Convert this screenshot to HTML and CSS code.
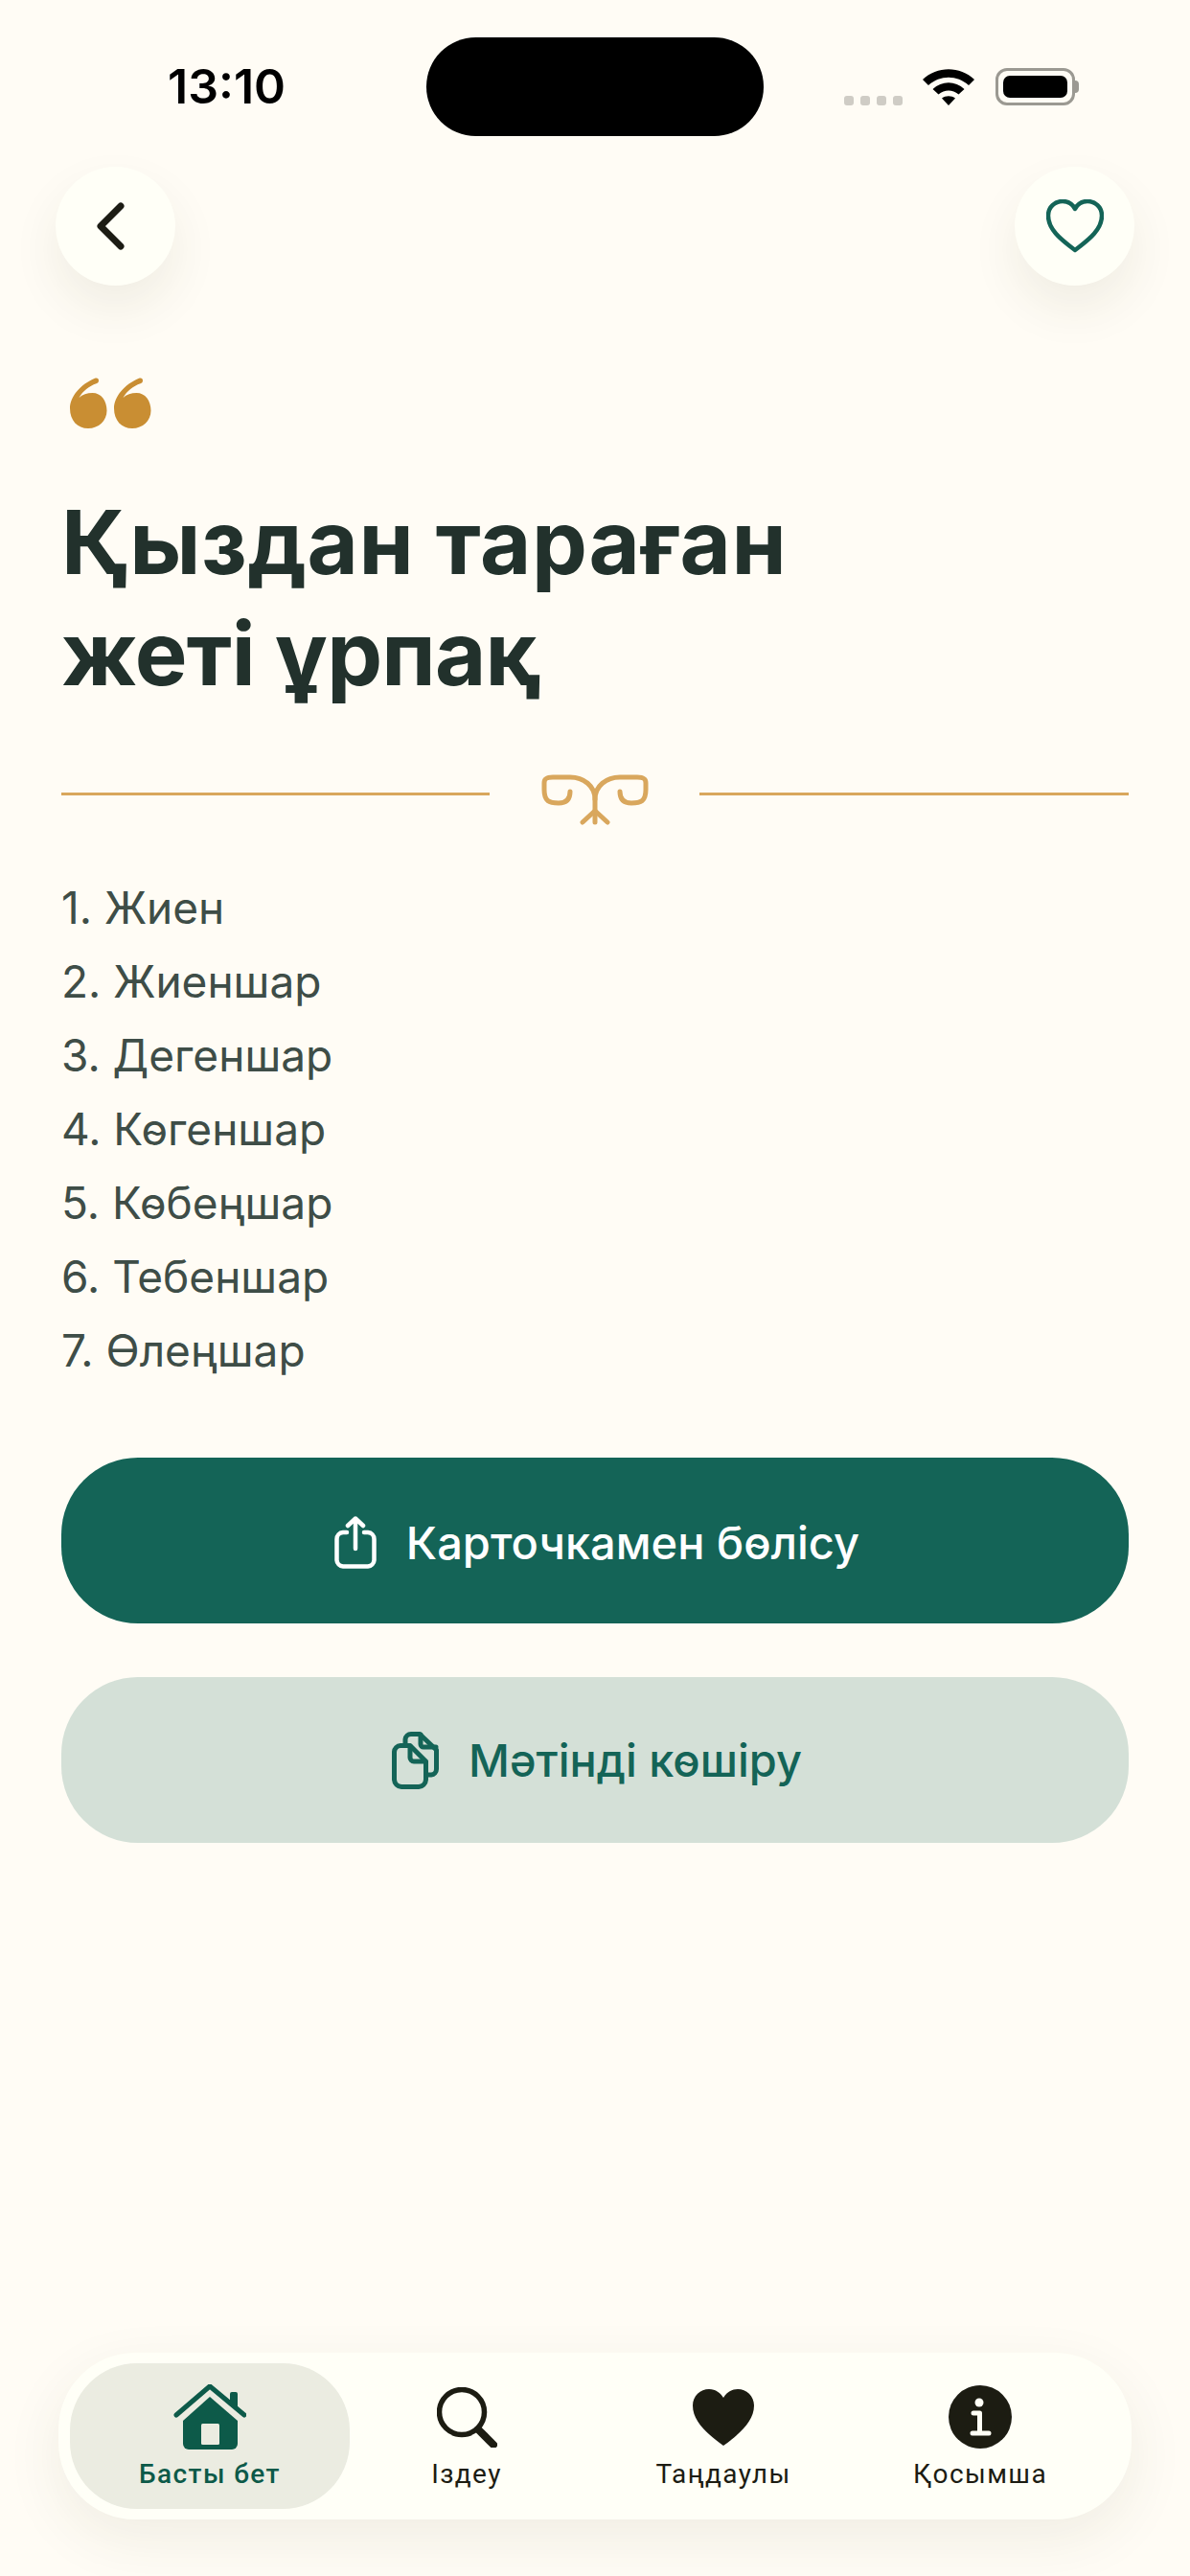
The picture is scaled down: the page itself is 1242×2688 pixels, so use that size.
FILE: index.html
```html
<!DOCTYPE html>
<html lang="kk">
<head>
    <meta charset="UTF-8">
    <meta name="viewport" content="width=device-width, initial-scale=1.0">
    <title>Қыздан тараған жеті ұрпақ</title>
    <link rel="stylesheet" href="styles.css">
</head>
<body>
    <!-- status bar -->
    <div class="status">
        <span class="time">13:10</span>
        <div class="island"></div>
        <div class="status-icons">
            <div class="dots"><i></i><i></i><i></i><i></i></div>
            <svg class="wifi" width="54" height="38" viewBox="0 0 54 38">
                <path d="M0 11C15 -3.500 39 -3.500 54 11L48 17C36 6 18 6 6 17Z"/>
                <path d="M10.500 21C20 12 34 12 43.500 21L37.500 26.500C31 21 23 21 16.500 26.500Z"/>
                <path d="M20 30.500C24 27.500 30 27.500 34 30.500L27 38Z"/>
            </svg>
            <div class="battery"><div class="battery-fill"></div></div>
            <div class="battery-cap"></div>
        </div>
    </div>

    <!-- top buttons -->
    <div class="top">
        <a class="round-btn" href="javascript:;">
            <svg class="back-icon" width="34" height="56" viewBox="0 0 34 56"><path d="M26 7L5 28L26 49" fill="none" stroke="#1c1c14" stroke-width="7" stroke-linecap="round" stroke-linejoin="round"/></svg>
        </a>
        <a class="round-btn" href="javascript:;">
            <svg width="60" height="56" viewBox="0 0 60 56"><path d="M30 53C14 41 2 31 2 17C2 8 9 2 17 2C23 2 27.500 5 30 10C32.500 5 37 2 43 2C51 2 58 8 58 17C58 31 46 41 30 53Z" fill="none" stroke="#146457" stroke-width="4.500" stroke-linejoin="round"/></svg>
        </a>
    </div>

    <div class="content">
        <svg class="quote" width="85" height="53" viewBox="0 0 85 53">
            <path id="quoteMark" d="M9.500 21C13 17.500 18 16 23.500 16C32.500 16 38.500 24 38.500 34.500C38.500 45 30 53 19 53C8 53 0 45 0 32C0 20 11 7 26 .800C28.500 0 30 1 30 3C30 5 29 5.800 27.500 6.300C20 9 13.500 14 9.500 21Z"/>
            <use href="#quoteMark" x="46"/>
        </svg>

        <h1 class="title"><span class="title-first">Қыздан тараған</span><span class="title-second">жеті ұрпақ</span></h1>

        <div class="divider">
            <div class="divider-line"></div>
            <svg class="ornament" width="112" height="53" viewBox="0 0 112 53" fill="none" stroke="#d9a75d" stroke-width="5" stroke-linecap="round" stroke-linejoin="round">
                <path d="M30 18C30 26 26 30 18 30C8 30 3 28 3 16L3 9C3 4 6 3 12 3L30 3C44 3 56 12 56 26L56 50"/>
                <path d="M82 18C82 26 86 30 94 30C104 30 109 28 109 16L109 9C109 4 106 3 100 3L82 3C68 3 56 12 56 26"/>
                <path d="M43 50L56 38L69 50"/>
            </svg>
            <div class="divider-line"></div>
        </div>

        <ol class="list">
            <li>1. Жиен</li>
            <li>2. Жиеншар</li>
            <li>3. Дегеншар</li>
            <li>4. Көгеншар</li>
            <li>5. Көбеңшар</li>
            <li>6. Тебеншар</li>
            <li>7. Өлеңшар</li>
        </ol>

        <a class="btn btn-main" href="javascript:;">
            <svg width="44" height="55" viewBox="0 0 44 55" fill="none" stroke="#fff" stroke-width="4.500" stroke-linecap="round" stroke-linejoin="round">
                <path d="M13 17H9A7 7 0 0 0 2.500 24V46A7 7 0 0 0 9 52.500H35A7 7 0 0 0 41.500 46V24A7 7 0 0 0 35 17H31"/>
                <path d="M22 34V2.500M14 10L22 2.500L30 10"/>
            </svg>
            <span>Карточкамен бөлісу</span>
        </a>
        <a class="btn btn-light" href="javascript:;">
            <svg width="49" height="60" viewBox="0 0 49 60" fill="none" stroke="#146457" stroke-width="5" stroke-linecap="round" stroke-linejoin="round">
                <path d="M14 13V8A6 6 0 0 1 20 2.500H29L46.500 19V39A6 6 0 0 1 41 45H37"/>
                <path d="M30 3V13A3 3 0 0 0 33 16H46"/>
                <path d="M9 14.500H19L35.500 31V50A8 8 0 0 1 28 57.500H10A8 8 0 0 1 2.500 50V21A7 7 0 0 1 9 14.500Z"/>
                <path d="M19 15V27A4 4 0 0 0 23 31H35"/>
            </svg>
            <span>Мәтінді көшіру</span>
        </a>
    </div>

    <!-- bottom tabs -->
    <nav class="tabbar">
        <a class="tab tab-active" href="javascript:;">
            <span class="tab-icon">
                <svg width="76" height="68" viewBox="0 0 76 68">
                    <path d="M59 22V10A2 2 0 0 1 61 8H65A2 2 0 0 1 67 10V26Z" fill="#0d5a49"/>
                    <path d="M3 32L38 2L74 32" fill="none" stroke="#0d5a49" stroke-width="5" stroke-linecap="round" stroke-linejoin="round"/>
                    <path d="M38 13L67 38V62A6 6 0 0 1 61 68H16A6 6 0 0 1 10 62V38Z" fill="#0d5a49"/>
                    <rect x="29" y="41" width="19" height="22" rx="1.500" fill="#ebece1"/>
                </svg>
            </span>
            <span class="tab-label">Басты бет</span>
        </a>
        <a class="tab" href="javascript:;">
            <span class="tab-icon">
                <svg width="63" height="63" viewBox="0 0 63 63" fill="none" stroke="#1c1c12">
                    <circle cx="26" cy="26" r="23.500" stroke-width="5.500"/>
                    <path d="M43 44L59 60" stroke-width="8" stroke-linecap="round"/>
                </svg>
            </span>
            <span class="tab-label">Іздеу</span>
        </a>
        <a class="tab" href="javascript:;">
            <span class="tab-icon">
                <svg width="64" height="59" viewBox="0 0 64 59"><path d="M32 59C14 46 0 33 0 17C0 7 8 0 17 0C24 0 29 4 32 9C35 4 40 0 47 0C56 0 64 7 64 17C64 33 50 46 32 59Z" fill="#1c1c12"/></svg>
            </span>
            <span class="tab-label">Таңдаулы</span>
        </a>
        <a class="tab" href="javascript:;">
            <span class="tab-icon">
                <svg width="66" height="66" viewBox="0 0 66 66">
                    <circle cx="33" cy="33" r="33" fill="#1c1c12"/>
                    <circle cx="32" cy="18" r="4.500" fill="#fffff6"/>
                    <path d="M26 29H32.500V49M25 50H42" fill="none" stroke="#fffff6" stroke-width="5" stroke-linecap="round" stroke-linejoin="round"/>
                </svg>
            </span>
            <span class="tab-label">Қосымша</span>
        </a>
    </nav>
</body>
</html>
```

FILE: styles.css
```css
*{
    padding: 0;
    margin: 0;
    box-sizing: border-box;
}

body{
    width: 1242px;
    height: 2688px;
    display: flex;
    flex-direction: column;
    background-color: #fffcf5;
    font-family: Inter, "Noto Sans", sans-serif;
    overflow: hidden;
}

a{
    text-decoration: none;
    color: inherit;
}

/* status bar */
.status{
    display: flex;
    align-items: center;
    padding: 39px 0 0 175px;
}

.time{
    width: 123px;
    font-size: 50px;
    font-weight: 600;
    line-height: 103px;
    color: #000;
}

.island{
    width: 352px;
    height: 103px;
    margin-left: 147px;
    border-radius: 52px;
    background-color: #000;
}

.status-icons{
    display: flex;
    align-items: center;
    margin-left: 84px;
}

.dots{
    display: flex;
    gap: 7px;
    margin-top: 28px;
}

.dots i{
    width: 10px;
    height: 10px;
    border-radius: 3px;
    background-color: #cfccc5;
}

.wifi{
    margin-left: 21px;
    fill: #000;
}

.battery{
    width: 83px;
    height: 39px;
    margin-left: 22px;
    padding: 5px;
    border: 3px solid #9b9992;
    border-radius: 12px;
}

.battery-fill{
    width: 100%;
    height: 100%;
    border-radius: 7px;
    background-color: #000;
}

.battery-cap{
    width: 4px;
    height: 13px;
    border-radius: 0 4px 4px 0;
    background-color: #9b9992;
}

/* top buttons */
.top{
    display: flex;
    justify-content: space-between;
    margin-top: 32px;
    padding: 0 58px;
}

.round-btn{
    width: 125px;
    height: 124px;
    display: flex;
    align-items: center;
    justify-content: center;
    border-radius: 50%;
    background-color: #fffff7;
    box-shadow: 0 24px 50px rgba(70, 60, 30, .08);
}

.back-icon{
    margin-right: 8px;
}

/* main part */
.content{
    display: flex;
    flex-direction: column;
    padding: 0 64px;
}

.quote{
    margin: 96px 0 0 9px;
    fill: #c98e33;
}

.title{
    margin-top: 61px;
    font-size: 92px;
    font-weight: 700;
    line-height: 116px;
    color: #22312c;
}

.title span{
    display: block;
}

.title-first{
    letter-spacing: .6px;
}

.title-second{
    letter-spacing: -.8px;
}

.divider{
    display: flex;
    align-items: flex-start;
    justify-content: space-between;
    margin-top: 68px;
}

.divider-line{
    width: 447px;
    height: 3px;
    margin-top: 19px;
    background-color: #d9a75d;
}

.divider-line:last-child{
    width: 448px;
}

.list{
    margin-top: 48px;
    list-style: none;
    font-size: 46px;
    line-height: 77px;
    color: #3e4d47;
}

.btn{
    height: 173px;
    display: flex;
    align-items: center;
    justify-content: center;
    gap: 31px;
    padding-left: 4px;
    border-radius: 80px;
    font-size: 47px;
    font-weight: 500;
}

.btn-main{
    margin-top: 73px;
    padding-top: 4px;
    background-color: #146457;
    color: #fff;
}

.btn-light{
    margin-top: 56px;
    background-color: #d4e0d7;
    color: #146457;
}

/* bottom tabs */
.tabbar{
    display: grid;
    grid-template-columns: repeat(4, 268px);
    height: 174px;
    margin: auto 61px 59px;
    padding: 11px 24px;
    border-radius: 80px;
    background-color: #fffff7;
    box-shadow: 0 20px 60px rgba(70, 60, 30, .08);
}

.tab{
    display: flex;
    flex-direction: column;
    align-items: center;
    padding-top: 21px;
    border-radius: 70px;
    color: #1c1c12;
}

.tab-active{
    margin: 0 -12px;
    background-color: #ebece1;
    color: #0d5a49;
}

.tab-icon{
    height: 70px;
    display: flex;
    align-items: center;
    justify-content: center;
}

.tab-label{
    margin-top: 8px;
    font-family: Roboto, "Noto Sans", sans-serif;
    font-size: 28px;
    line-height: 34px;
    letter-spacing: 1.400px;
}

.tab-active .tab-label{
    font-weight: 500;
}
```
